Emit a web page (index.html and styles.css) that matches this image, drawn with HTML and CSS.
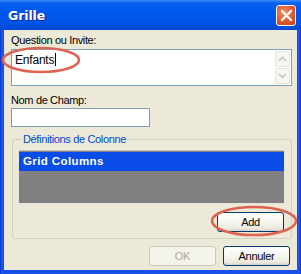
FILE: index.html
```html
<!DOCTYPE html>
<html>
<head>
<meta charset="utf-8">
<link rel="stylesheet" href="styles.css">
</head>
<body>
<div class="window">
  <div class="titlebar">
    <span class="title">Grille</span>
    <span class="close">
      <svg width="13" height="13" viewBox="0 0 13 13"><path d="M2 2 L11 11 M11 2 L2 11" stroke="#fff" stroke-width="2.2" stroke-linecap="square"/></svg>
    </span>
  </div>
  <div class="client">
    <div class="lbl">Question ou Invite:</div>
    <div class="textarea">
      <div class="val">Enfants<span class="caret"></span></div>
      <div class="scroll">
        <div class="sbtn"><svg width="9" height="6" viewBox="0 0 9 6"><path d="M1 5 L4.5 1.5 L8 5" fill="none" stroke="#c8c6bb" stroke-width="1.6"/></svg></div>
        <div class="sbtn"><svg width="9" height="6" viewBox="0 0 9 6"><path d="M1 1 L4.5 4.5 L8 1" fill="none" stroke="#c8c6bb" stroke-width="1.6"/></svg></div>
      </div>
    </div>
    <div class="lbl lbl2">Nom de Champ:</div>
    <div class="input"></div>
    <fieldset class="group">
      <legend>Définitions de Colonne</legend>
      <div class="list">
        <div class="row">Grid Columns</div>
      </div>
      <div class="group-actions"><span class="btn add">Add</span></div>
    </fieldset>
    <div class="actions">
      <span class="btn disabled">OK</span>
      <span class="btn">Annuler</span>
    </div>
  </div>
  <svg class="ring ring1" width="80" height="28" viewBox="0 0 80 28"><ellipse cx="40" cy="14" rx="38" ry="12" fill="none" stroke="#dd6452" stroke-width="2.6"/></svg>
  <svg class="ring ring2" width="88" height="32" viewBox="0 0 88 32"><ellipse cx="44" cy="16" rx="42" ry="14" fill="none" stroke="#dd6452" stroke-width="2.6"/></svg>
</div>
</body>
</html>
```
FILE: styles.css
```css
* { box-sizing: border-box; }
html, body { margin: 0; padding: 0; background: #fff; }
body { font-family: "Liberation Sans", Arial, sans-serif; font-size: 11px; color: #000; }

.window {
  position: relative;
  width: 301px;
  height: 274px;
  background: linear-gradient(90deg, #0831c8 0, #1f5cf2 2px, #1650e8 3px, #1650e8 298px, #1f5cf2 299px, #0831c8 301px);
  display: flex;
  flex-direction: column;
  overflow: hidden;
}

.titlebar {
  height: 30px;
  flex: none;
  display: flex;
  align-items: center;
  justify-content: space-between;
  padding: 0 5px 0 8px;
  background: linear-gradient(180deg, #3c8ef8 0, #0a5fee 3px, #0058ee 12px, #0054e6 22px, #0048d2 30px);
}
.title {
  color: #fff;
  font-family: "DejaVu Sans", Verdana, sans-serif;
  font-weight: bold;
  font-size: 12.5px;
  text-shadow: 1px 1px 0 #0a2a90;
  letter-spacing: -0.1px;
}
.close {
  width: 20px;
  height: 21px;
  border: 1px solid #fff;
  border-radius: 3px;
  background: radial-gradient(circle at 40% 35%, #f0916d 0, #e0592e 55%, #c23b12 100%);
  display: flex;
  align-items: center;
  justify-content: center;
}

.client {
  flex: 1;
  margin: 0 4px 4px 4px;
  background: #ece9d8;
  padding: 4px 5px 0 7px;
  display: flex;
  flex-direction: column;
}

.lbl { height: 13px; line-height: 13px; letter-spacing: -0.35px; }
.lbl2 { margin-top: 8px; }

.textarea {
  margin-top: 2px;
  height: 37px;
  background: #fff;
  border: 1px solid #7f9db9;
  display: flex;
  justify-content: space-between;
  padding: 1px 1px 1px 3px;
}
.val { font-size: 12px; line-height: 16px; padding-top: 1px; letter-spacing: -0.2px; }
.caret {
  display: inline-block;
  width: 1px;
  height: 13px;
  background: #000;
  vertical-align: -2px;
  margin-left: 1px;
}
.scroll { display: flex; flex-direction: column; gap: 1px; }
.sbtn {
  width: 15px;
  height: 16px;
  border: 1px solid #e6e4dc;
  border-radius: 2px;
  background: #f6f5f0;
  display: flex;
  align-items: center;
  justify-content: center;
}

.input {
  margin-top: 1px;
  width: 139px;
  height: 19px;
  background: #fff;
  border: 1px solid #7f9db9;
}

.group {
  margin: 5px 0 0 1px;
  width: 280px;
  border: 1px solid #d0d0bf;
  border-radius: 3px;
  padding: 4px 6px 6px 5px;
}
.group legend {
  color: #0046d5;
  padding: 0 1px 0 2px;
  margin-left: 3px;
  line-height: 14px;
  letter-spacing: -0.35px;
}
.list {
  height: 54px;
  background: #808080;
  border: 1px solid #e6e4dc;
  border-top-color: #c8c6bb;
  padding-top: 1px;
}
.row {
  height: 19px;
  background: #0a4ce8;
  color: #fff;
  font-weight: bold;
  font-size: 11.5px;
  line-height: 19px;
  padding-left: 4px;
  letter-spacing: 0.4px;
}
.group-actions {
  display: flex;
  justify-content: flex-end;
  margin-top: 8px;
}

.btn {
  width: 67px;
  height: 20px;
  border: 1px solid #003c74;
  border-radius: 3px;
  background: linear-gradient(180deg, #ffffff 0, #f6f5f0 50%, #ebe9e0 85%, #d6d0c5 100%);
  display: flex;
  align-items: center;
  justify-content: center;
  letter-spacing: -0.3px;
}
.btn.add { margin-right: 1px; }
.btn.disabled {
  border-color: #cac8bb;
  background: #f5f4ea;
  color: #aca899;
}
.actions {
  display: flex;
  justify-content: flex-end;
  gap: 7px;
  margin-top: 7px;
  padding-right: 2px;
}

.ring { position: absolute; }
.ring1 { left: 1px; top: 46px; }
.ring2 { left: 210px; top: 205px; }
```
